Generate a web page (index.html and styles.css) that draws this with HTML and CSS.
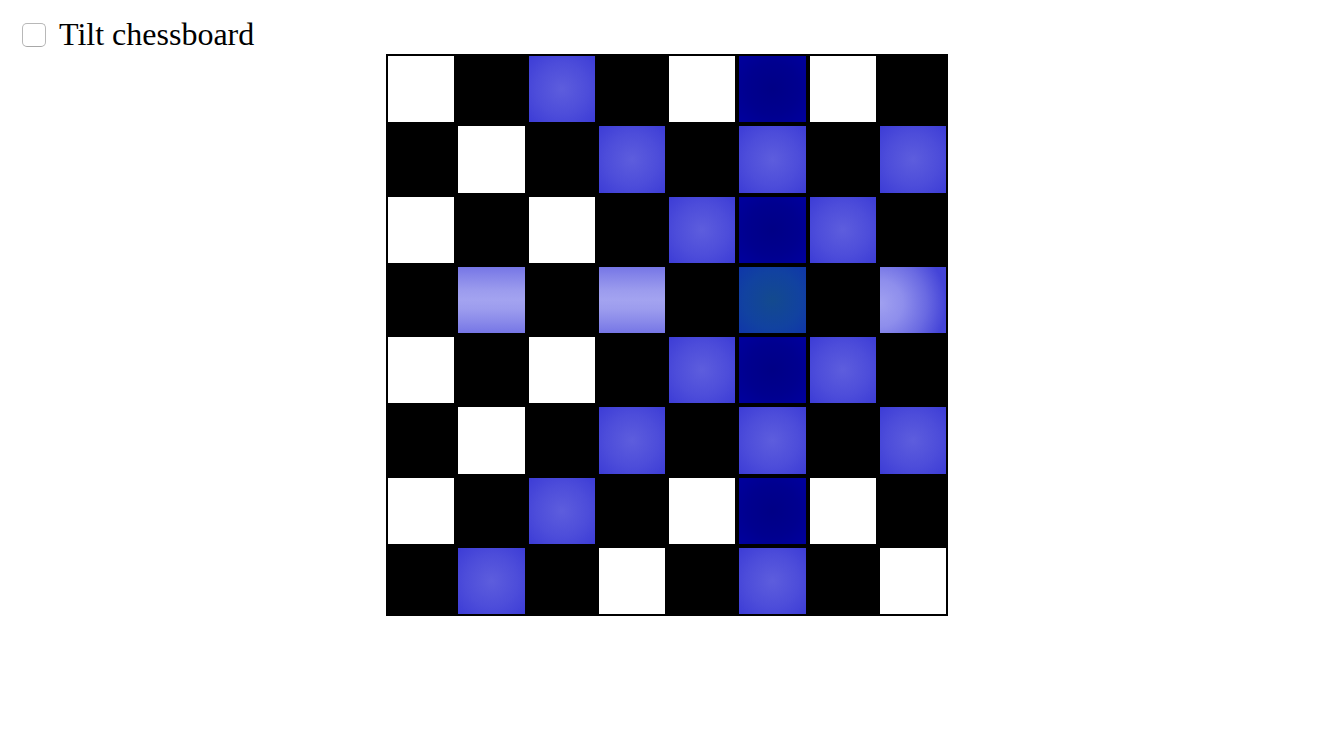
FILE: index.html
```html
<!DOCTYPE html>
<html lang="en">
<head>
<meta charset="utf-8">
<title>Chessboard</title>
<link rel="stylesheet" href="styles.css">
</head>
<body>
<div class="controls">
  <label class="tilt"><input type="checkbox" class="tilt-box"><span class="tilt-text">Tilt chessboard</span></label>
</div>
<div class="board">
  <div class="cell w"></div><div class="cell b"></div><div class="cell blue"></div><div class="cell b"></div><div class="cell w"></div><div class="cell navy"></div><div class="cell w"></div><div class="cell b"></div>
  <div class="cell b"></div><div class="cell w"></div><div class="cell b"></div><div class="cell blue"></div><div class="cell b"></div><div class="cell blue"></div><div class="cell b"></div><div class="cell blue"></div>
  <div class="cell w"></div><div class="cell b"></div><div class="cell w"></div><div class="cell b"></div><div class="cell blue"></div><div class="cell navy"></div><div class="cell blue"></div><div class="cell b"></div>
  <div class="cell b"></div><div class="cell light"></div><div class="cell b"></div><div class="cell light"></div><div class="cell b"></div><div class="cell queen"></div><div class="cell b"></div><div class="cell edge"></div>
  <div class="cell w"></div><div class="cell b"></div><div class="cell w"></div><div class="cell b"></div><div class="cell blue"></div><div class="cell navy"></div><div class="cell blue"></div><div class="cell b"></div>
  <div class="cell b"></div><div class="cell w"></div><div class="cell b"></div><div class="cell blue"></div><div class="cell b"></div><div class="cell blue"></div><div class="cell b"></div><div class="cell blue"></div>
  <div class="cell w"></div><div class="cell b"></div><div class="cell blue"></div><div class="cell b"></div><div class="cell w"></div><div class="cell navy"></div><div class="cell w"></div><div class="cell b"></div>
  <div class="cell b"></div><div class="cell blue"></div><div class="cell b"></div><div class="cell w"></div><div class="cell b"></div><div class="cell blue"></div><div class="cell b"></div><div class="cell w"></div>
</div>
</body>
</html>
```

FILE: styles.css
```css
html, body {
  margin: 0;
  padding: 0;
  background: #ffffff;
}

body {
  font-family: "Liberation Serif", "Times New Roman", serif;
  color: #000000;
}

.controls {
  box-sizing: border-box;
  height: 54px;
  padding: 15px 0 0 22px;
}

.tilt {
  display: flex;
  align-items: center;
  height: 38px;
}

.tilt-box {
  -webkit-appearance: none;
  appearance: none;
  margin: 1px 13px 0 0;
  width: 24px;
  height: 24px;
  box-sizing: border-box;
  border: 1px solid #b8b8b8;
  border-bottom-color: #a8a8a8;
  border-radius: 5px;
  background: #ffffff;
}

.tilt-text {
  font-size: 32px;
  line-height: 37px;
}

.board {
  width: 562px;
  height: 562px;
  margin: 0 auto;
  display: grid;
  grid-template-columns: repeat(8, 1fr);
  grid-template-rows: repeat(8, 1fr);
  background: #000000;
}

.cell {
  box-sizing: border-box;
  border: 2px solid #000000;
  background-clip: padding-box;
}

.w {
  background-color: #ffffff;
}

.b {
  background-color: #000000;
}

.blue {
  background-image: radial-gradient(circle closest-corner, #5d5ddd 0%, #4d4dda 55%, #3c3cd6 100%);
}

.navy {
  background-image: radial-gradient(circle closest-corner, #000086 0%, #00008f 55%, #00009e 100%);
}

.light {
  background-image: linear-gradient(to bottom, #7676e6 0%, #8a8aea 18%, #9c9cee 36%, #a3a3f0 50%, #9c9cee 64%, #8a8aea 82%, #7676e6 100%);
}

.edge {
  background-image: radial-gradient(circle farthest-side at 0% 55%, #a0a0f0 0%, #8e8eec 35%, #6a6ae2 70%, #4444d8 100%);
}

.queen {
  background-image: radial-gradient(circle closest-corner, #134a8e 0%, #1142a0 60%, #0f36aa 100%);
}
```
